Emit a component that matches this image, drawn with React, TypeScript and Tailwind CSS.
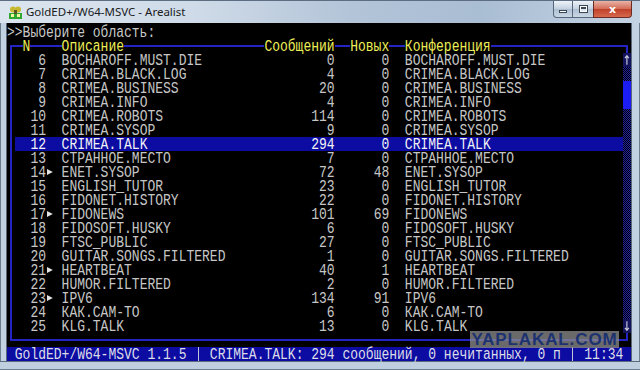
import React from "react";

type Area = { n: number; tag: string; total: number; unread: number; linked?: boolean };

const areas: Area[] = [
  { n: 6, tag: "BOCHAROFF.MUST.DIE", total: 0, unread: 0 },
  { n: 7, tag: "CRIMEA.BLACK.LOG", total: 4, unread: 0 },
  { n: 8, tag: "CRIMEA.BUSINESS", total: 20, unread: 0 },
  { n: 9, tag: "CRIMEA.INFO", total: 4, unread: 0 },
  { n: 10, tag: "CRIMEA.ROBOTS", total: 114, unread: 0 },
  { n: 11, tag: "CRIMEA.SYSOP", total: 9, unread: 0 },
  { n: 12, tag: "CRIMEA.TALK", total: 294, unread: 0 },
  { n: 13, tag: "СТРАННОЕ.МЕСТО", total: 7, unread: 0 },
  { n: 14, tag: "ENET.SYSOP", total: 72, unread: 48, linked: true },
  { n: 15, tag: "ENGLISH_TUTOR", total: 23, unread: 0 },
  { n: 16, tag: "FIDONET.HISTORY", total: 22, unread: 0 },
  { n: 17, tag: "FIDONEWS", total: 101, unread: 69, linked: true },
  { n: 18, tag: "FIDOSOFT.HUSKY", total: 6, unread: 0 },
  { n: 19, tag: "FTSC_PUBLIC", total: 27, unread: 0 },
  { n: 20, tag: "GUITAR.SONGS.FILTERED", total: 1, unread: 0 },
  { n: 21, tag: "HEARTBEAT", total: 40, unread: 1, linked: true },
  { n: 22, tag: "HUMOR.FILTERED", total: 2, unread: 0 },
  { n: 23, tag: "IPV6", total: 134, unread: 91, linked: true },
  { n: 24, tag: "КАК.САМ-ТО", total: 6, unread: 0 },
  { n: 25, tag: "KLG.TALK", total: 13, unread: 0 },
];

const CURRENT = 12;

// console text, stretched vertically like the raster terminal font
function T({ children, className = "" }: { children: React.ReactNode; className?: string }) {
  return (
    <span
      className={`inline-block shrink-0 self-center scale-y-125 whitespace-pre leading-[11px] ${className}`}
    >
      {children}
    </span>
  );
}

function HLine({ w }: { w: string }) {
  return (
    <div className={`flex shrink-0 flex-col justify-center ${w}`}>
      <div className="h-[2px] bg-[#2424c4]" />
    </div>
  );
}

function VLine() {
  return (
    <div className="flex w-[7.8px] shrink-0 justify-center">
      <div className="w-[2px] bg-[#2424c4]" />
    </div>
  );
}

function Arrow({ up }: { up?: boolean }) {
  return (
    <div className="flex w-[7.8px] shrink-0 items-center justify-center bg-[#14145e]">
      <svg width="8" height="14" viewBox="0 0 8 14">
        {up ? (
          <path d="M4 2.5V12M2 5L4 2.5L6 5" stroke="#c8c8d8" strokeWidth="1.2" fill="none" />
        ) : (
          <path d="M4 2V11.5M2 9L4 11.5L6 9" stroke="#c8c8d8" strokeWidth="1.2" fill="none" />
        )}
      </svg>
    </div>
  );
}

function Bar({ i }: { i: number }) {
  if (i === 0) return <Arrow up />;
  if (i === 19) return <Arrow />;
  if (i === 2 || i === 3) return <div className="w-[7.8px] shrink-0 bg-[#1c1cf4]" />;
  return (
    <div className="w-[7.8px] shrink-0 bg-[image:repeating-conic-gradient(#22229a_0_25%,#00000c_0_50%)] bg-[length:2px_2px]" />
  );
}

function Marker({ on }: { on?: boolean }) {
  return (
    <div className="flex w-[7.8px] shrink-0 items-center">
      {on && (
        <svg width="8" height="14" viewBox="0 0 8 14">
          <polygon points="1,4 7,7 1,10" fill="#e4e4e4" />
        </svg>
      )}
    </div>
  );
}

function AreaRow({ a, i }: { a: Area; i: number }) {
  const active = a.n === CURRENT;
  const rest =
    " " +
    a.tag.padEnd(26) +
    String(a.total).padStart(9) +
    "  " +
    String(a.unread).padStart(5) +
    "  " +
    a.tag.padEnd(28);
  return (
    <div className="flex h-[14px]">
      <VLine />
      <div
        className={`flex w-[608.4px] shrink-0 ${
          active ? "bg-[#0c0ca2] text-[#f2f2f6]" : "text-[#c6c6c6]"
        }`}
      >
        <T>{String(a.n).padStart(4)}</T>
        <Marker on={a.linked} />
        <T>{rest}</T>
      </div>
      <Bar i={i} />
    </div>
  );
}

function TitleBar() {
  return (
    <div className="flex h-[23px] shrink-0 items-start bg-[linear-gradient(90deg,#dbe5ef_0%,#cfdbe8_30%,#b3c4d8_55%,#a9bdd3_75%,#c4d3e3_100%)] border-t border-[#5d6e82]">
      <svg className="ml-[8px] mt-[4px]" width="15" height="15" viewBox="0 0 15 15">
        <rect x="1" y="8" width="13" height="6" fill="#2ea82e" />
        <rect x="3" y="9" width="3" height="3" fill="#f4f4a0" />
        <rect x="9" y="9" width="3" height="3" fill="#f4f4a0" />
        <circle cx="5" cy="4.5" r="3" fill="#c8b830" />
        <circle cx="10" cy="4.5" r="3" fill="#c8b830" />
        <rect x="6" y="5" width="3" height="4" fill="#5a5a20" />
      </svg>
      <span className="ml-[3px] mt-[3px] font-['Noto_Sans',sans-serif] text-[11.5px] leading-[16px] text-[#1b1b1b]">
        GoldED+/W64-MSVC - Arealist
      </span>
      <div className="ml-auto mr-[8px] flex">
        <div className="flex h-[17px] w-[20px] items-center justify-center rounded-bl-[4px] border border-t-0 border-[#56677c] bg-[linear-gradient(#eef3f8,#c3d1e0_50%,#aebfd3_51%,#c9d6e4)]">
          <div className="mt-[5px] h-[3px] w-[8px] border border-[#3b4656] bg-white" />
        </div>
        <div className="flex h-[17px] w-[20px] items-center justify-center border-b border-[#56677c] bg-[linear-gradient(#eef3f8,#c3d1e0_50%,#aebfd3_51%,#c9d6e4)]">
          <div className="h-[8px] w-[9px] border border-[#3b4656] bg-white p-[1px]">
            <div className="h-full w-full border-t-2 border-[#3b4656] bg-[#dce4ee]" />
          </div>
        </div>
        <div className="flex h-[17px] w-[39px] items-center justify-center rounded-br-[4px] border border-t-0 border-[#6b2a22] bg-[linear-gradient(#eab3a6,#d26b55_50%,#c0402a_51%,#d6684c)]">
          <span className="font-['DejaVu_Sans',sans-serif] text-[11px] font-bold leading-none text-white">x</span>
        </div>
      </div>
    </div>
  );
}

export default function App() {
  return (
    <div className="relative flex h-[370px] w-[640px] flex-col overflow-hidden bg-[#b6c7da] font-['Liberation_Mono','DejaVu_Sans_Mono',monospace] text-[13px]">
      <TitleBar />
      <div className="flex h-[338px] shrink-0">
        <div className="w-[7px] shrink-0 border-l border-r border-l-[#6d7d90] border-r-[#5a6a7c] bg-[#c3d2e2]" />
        <div className="w-[624px] shrink-0 bg-black pt-[2px]">
          <div className="flex h-[14px] text-[#c8c8c8]">
            <T>{">>Выберите область:"}</T>
          </div>

          <div className="flex h-[14px] text-[#eeee58]">
            <div className="flex w-[7.8px] shrink-0 flex-col">
              <div className="h-[6px]" />
              <div className="ml-[2.9px] flex-1 border-l-2 border-t-2 border-[#2424c4]" />
            </div>
            <HLine w="w-[7.8px]" />
            <T>N</T>
            <HLine w="w-[31.2px]" />
            <T>Описание</T>
            <HLine w="w-[140.4px]" />
            <T>Сообщений</T>
            <HLine w="w-[15.6px]" />
            <T>Новых</T>
            <HLine w="w-[15.6px]" />
            <T>Конференция</T>
            <HLine w="w-[132.6px]" />
            <div className="flex w-[7.8px] shrink-0 flex-col">
              <div className="h-[6px]" />
              <div className="mr-[2.9px] flex-1 border-r-2 border-t-2 border-[#2424c4]" />
            </div>
          </div>

          {areas.map((a, i) => (
            <AreaRow key={a.n} a={a} i={i} />
          ))}

          <div className="flex h-[14px]">
            <div className="w-[7.8px] shrink-0">
              <div className="ml-[2.9px] h-[8px] border-b-2 border-l-2 border-[#2424c4]" />
            </div>
            <HLine w="w-[608.4px]" />
            <div className="w-[7.8px] shrink-0">
              <div className="mr-[2.9px] h-[8px] border-b-2 border-r-2 border-[#2424c4]" />
            </div>
          </div>

          <div className="flex h-[14px] bg-[#0c0ca2] text-[#dcdce8]">
            <T>{" GoldED+/W64-MSVC 1.1.5 "}</T>
            <div className="flex w-[7.8px] shrink-0 justify-center">
              <div className="w-px bg-[#c4c4d8]" />
            </div>
            <T>{" CRIMEA.TALK: 294 сообщений, 0 нечитанных, 0 п "}</T>
            <div className="flex w-[7.8px] shrink-0 justify-center">
              <div className="w-px bg-[#c4c4d8]" />
            </div>
            <T>{" 11:34 "}</T>
          </div>
        </div>
        <div className="flex-1 border-l border-r border-l-[#5a6a7c] border-r-[#6d7d90] bg-[#c3d2e2]" />
      </div>
      <div className="h-[9px] shrink-0 border-b border-t border-b-[#6d7d90] border-t-[#5a6a7c] bg-[#bfcfe0]" />

      <div className="absolute left-[470px] top-[331px] flex h-[17px] w-[149px] items-center justify-center bg-[#8e8e8e]/75">
        <span className="font-['Liberation_Sans',sans-serif] text-[17px] font-bold leading-none tracking-[0.9px] text-[#1d3270]">
          YAPLAKAL.COM
        </span>
      </div>
    </div>
  );
}
